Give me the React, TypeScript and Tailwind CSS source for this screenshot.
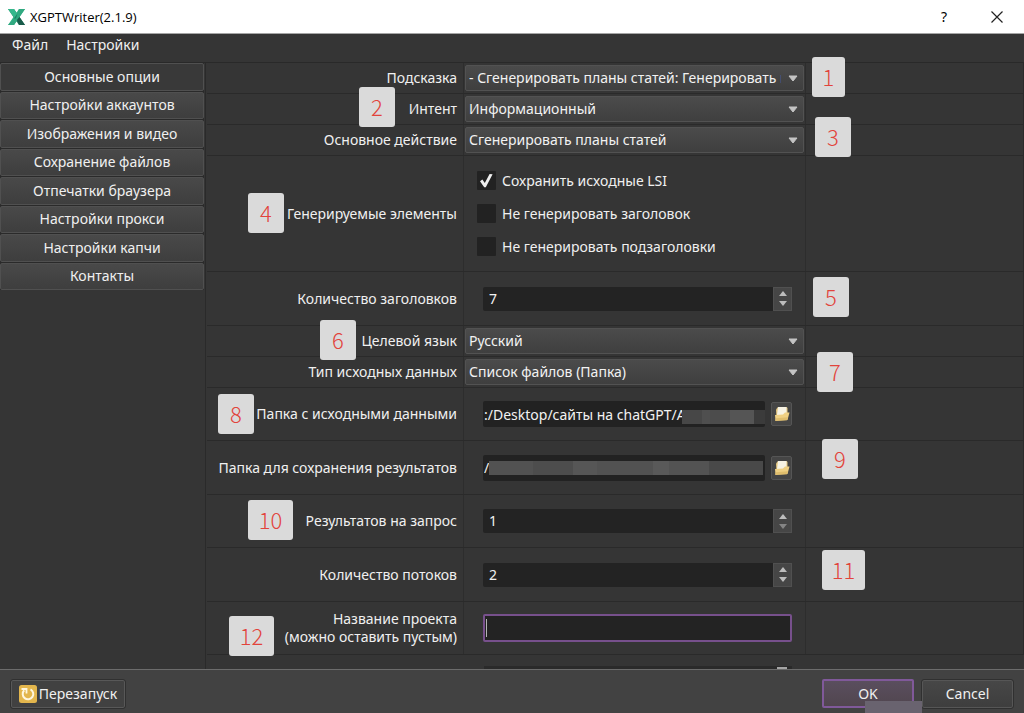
import type { ReactNode } from "react";

const sections = [
  "Основные опции",
  "Настройки аккаунтов",
  "Изображения и видео",
  "Сохранение файлов",
  "Отпечатки браузера",
  "Настройки прокси",
  "Настройки капчи",
  "Контакты",
];

function Marker({ n, className }: { n: number; className: string }) {
  return (
    <span
      className={`absolute z-10 flex h-10 items-center justify-center rounded-[3px] bg-[#dadada] pb-[3px] font-['Noto_Sans_CJK_SC','Noto_Sans',sans-serif] text-[22px] leading-none font-light text-[#e2433b] ${className}`}
    >
      {n}
    </span>
  );
}

type RowProps = {
  label?: ReactNode;
  htmlFor?: string;
  height: string;
  side?: ReactNode;
  marker?: ReactNode;
  flush?: boolean;
  children: ReactNode;
};

function Row({ label, htmlFor, height, side, marker, flush, children }: RowProps) {
  return (
    <div className={`flex shrink-0 border-b border-[#2a2a2a] ${height}`}>
      <div className="relative flex w-[257px] shrink-0 items-center justify-end border-r border-[#2d2d2d] pr-[6px] text-right leading-[18px]">
        {marker}
        <label htmlFor={htmlFor}>{label}</label>
      </div>
      <div
        className={`flex w-[342px] shrink-0 items-center border-r border-[#2d2d2d] ${flush ? "pr-px pl-px" : "pr-[13px] pl-[19px]"}`}
      >
        {children}
      </div>
      <div className="relative min-w-0 flex-1 border-r border-[#2a2a2a]">{side}</div>
    </div>
  );
}

function Combo({ id, value }: { id: string; value: string }) {
  return (
    <div className="relative w-full">
      <select
        id={id}
        className="block h-[26px] w-full appearance-none rounded-[2px] border border-[#525252] bg-linear-to-b from-[#4b4b4b] to-[#3f3f3f] pr-[22px] pl-[3px] text-[#f2f2f2] outline-none"
      >
        <option>{value}</option>
      </select>
      <svg className="pointer-events-none absolute top-[10px] right-[6px] h-[7px] w-[10px]" viewBox="0 0 10 7">
        <path d="M1 1h8L5 6z" fill="#c4c4c4" stroke="#c4c4c4" strokeLinejoin="round" />
      </svg>
    </div>
  );
}

function Spin({ id, value, atMin }: { id: string; value: string; atMin?: boolean }) {
  return (
    <div className="flex h-6 w-full rounded-[2px] bg-[#232323]">
      <input id={id} defaultValue={value} className="min-w-0 flex-1 bg-transparent pl-[6px] text-[#f2f2f2] outline-none" />
      <div className="flex w-[19px] flex-col border border-[#505050] bg-[#464646]">
        <button aria-label="Больше" className="flex flex-1 items-center justify-center">
          <svg className="h-[6px] w-[10px]" viewBox="0 0 10 6">
            <path d="M1 6h8L5 1z" fill="#bdbdbd" />
          </svg>
        </button>
        <button aria-label="Меньше" className="flex flex-1 items-center justify-center">
          <svg className="h-[6px] w-[10px]" viewBox="0 0 10 6">
            <path d="M1 0h8L5 5z" fill={atMin ? "#858585" : "#bdbdbd"} />
          </svg>
        </button>
      </div>
    </div>
  );
}

function PathField({ id, value, mask }: { id: string; value: string; mask: ReactNode }) {
  return (
    <div className="flex w-full items-center gap-[6px]">
      <div className="relative min-w-0 flex-1">
        <input id={id} defaultValue={value} className="block h-[26px] w-full rounded-[2px] bg-[#222222] pl-px text-[#f2f2f2] outline-none" />
        {mask}
      </div>
      <button aria-label="Выбрать папку" className="flex h-6 w-[21px] items-center justify-center rounded-[2px] border border-[#555555] bg-[#454545]">
        <svg className="h-4 w-4" viewBox="0 0 16 16">
          <path d="M2 3.5L4 1h8.500l1 1v8l-9 4-2-2z" fill="#e2c47c" />
          <path d="M4 1h8.500v8H3z" fill="#f7f3e4" />
          <path d="M1 9l8-.5 2-2h4.500L13.500 14l-12 1z" fill="#efd083" />
          <path d="M1 14.800l12-.6 1-3-12 1z" fill="#dfbd6c" />
        </svg>
      </button>
    </div>
  );
}

function Check({ label, checked }: { label: string; checked?: boolean }) {
  return (
    <label className="flex h-[33px] items-center gap-[6px]">
      <span className="relative h-[19px] w-[19px]">
        <input type="checkbox" defaultChecked={checked} className="peer block h-[19px] w-[19px] appearance-none rounded-[1px] bg-[#222222]" />
        <svg className="pointer-events-none absolute inset-0 hidden h-[19px] w-[19px] peer-checked:block" viewBox="0 0 19 19">
          <path d="M3 10.2l2.4-1.600 2.400 3.400L12.600 3l3 .2-6.800 13H7.200z" fill="#efefef" />
        </svg>
      </span>
      {label}
    </label>
  );
}

export default function App() {
  return (
    <div className="flex h-screen flex-col overflow-hidden bg-[#353535] font-['Noto_Sans','Open_Sans',sans-serif] text-[14px] leading-[18px] text-[#f0f0f0]">
      <header className="flex h-[34px] shrink-0 items-center border-b border-[#a5a5a5] bg-white pl-2 text-black">
        <svg className="h-4 w-[17px]" viewBox="0 0 17 16">
          <path d="M11 0h6L6 16H0z" fill="#2fae83" />
          <path d="M0 0h6l11 16h-6z" fill="#1d7f63" />
          <path d="M0 0h6l3.2 4.8-3 4.2z" fill="#35b88c" />
          <path d="M11 0h6L6 16H0l8-7z" fill="#30a980" />
          <path d="M9 11l2.5-3L17 16h-6z" fill="#195b4a" />
        </svg>
        <h1 className="ml-[5px] flex-1 font-['Open_Sans','Noto_Sans',sans-serif] text-[13px]">XGPTWriter(2.1.9)</h1>
        <button aria-label="Справка" className="w-[52px]">?</button>
        <button aria-label="Закрыть" className="flex w-[54px] justify-center">
          <svg className="h-3 w-3" viewBox="0 0 12 12">
            <path d="M.5.5l11 11M11.500.5l-11 11" stroke="#222" strokeWidth="1.200" />
          </svg>
        </button>
      </header>

      <nav className="flex h-[29px] shrink-0 gap-[18px] border-b border-[#292929] pl-3">
        <button className="h-[22px]">Файл</button>
        <button className="h-[22px]">Настройки</button>
      </nav>

      <div className="flex min-h-0 flex-1">
        <aside className="w-[206px] shrink-0 border-r border-[#2a2a2a] pr-px">
          <div className="flex h-[227px] flex-col gap-px bg-[#2a2a2a]">
            {sections.map((s, i) => (
              <button
                key={s}
                className={`flex-1 rounded-[2px] border border-[#505050] ${i === 0 ? "bg-[#393939]" : "bg-linear-to-b from-[#494949] to-[#3e3e3e]"}`}
              >
                {s}
              </button>
            ))}
          </div>
        </aside>

        <main className="-mt-2 flex min-w-0 flex-1 flex-col overflow-hidden pt-2 pl-px">
          <Row label="Подсказка" htmlFor="prompt" height="h-[31px]" flush side={<Marker n={1} className="-top-[6px] left-[6px] w-[33px]" />}>
            <Combo id="prompt" value="- Сгенерировать планы статей: Генерировать планы" />
          </Row>
          <Row label="Интент" htmlFor="intent" height="h-[31px]" flush marker={<Marker n={2} className="-top-[7px] right-[68px] w-9" />}>
            <Combo id="intent" value="Информационный" />
          </Row>
          <Row label="Основное действие" htmlFor="action" height="h-[31px]" flush side={<Marker n={3} className="-top-2 left-[9px] w-9" />}>
            <Combo id="action" value="Сгенерировать планы статей" />
          </Row>
          <Row label="Генерируемые элементы" height="h-[116px]" marker={<Marker n={4} className="top-[37px] right-[179px] w-9" />}>
            <div className="-ml-[6px]">
              <Check label="Сохранить исходные LSI" checked />
              <Check label="Не генерировать заголовок" />
              <Check label="Не генерировать подзаголовки" />
            </div>
          </Row>
          <Row label="Количество заголовков" htmlFor="headings" height="h-[54px]" side={<Marker n={5} className="top-[5px] left-[7px] w-9" />}>
            <Spin id="headings" value="7" />
          </Row>
          <Row label="Целевой язык" htmlFor="lang" height="h-[31px]" flush marker={<Marker n={6} className="-top-[6px] right-[107px] w-9" />}>
            <Combo id="lang" value="Русский" />
          </Row>
          <Row label="Тип исходных данных" htmlFor="source" height="h-[31px]" flush side={<Marker n={7} className="-top-[5px] left-[11px] w-9" />}>
            <Combo id="source" value="Список файлов (Папка)" />
          </Row>
          <Row label="Папка с исходными данными" htmlFor="input-dir" height="h-[53px]" marker={<Marker n={8} className="top-[6px] right-[209px] w-9" />}>
            <PathField
              id="input-dir"
              value=":/Desktop/сайты на chatGPT/A"
              mask={
                <div className="absolute right-0 bottom-[3px] flex h-[14px] w-[83px] bg-[#4b4b4b]">
                  <i className="w-5 bg-[#474747]" />
                  <i className="w-2 bg-[#4f4f4f]" />
                  <i className="w-5 bg-[#4c4c4c]" />
                  <i className="w-6 bg-[#555555]" />
                  <i className="flex-1 bg-[#3b3b3b]" />
                </div>
              }
            />
          </Row>
          <Row label="Папка для сохранения результатов" htmlFor="output-dir" height="h-[54px]" side={<Marker n={9} className="-top-[2px] left-4 w-9" />}>
            <PathField
              id="output-dir"
              value="/"
              mask={
                <div className="absolute right-[2px] bottom-[6px] left-[6px] flex h-[14px] bg-[#4d4d4d]">
                  <i className="w-11 bg-[#525252]" />
                  <i className="w-10 bg-[#4d4d4d]" />
                  <i className="w-6 bg-[#565656]" />
                  <i className="w-14 bg-[#525252]" />
                  <i className="w-4 bg-[#595959]" />
                  <i className="w-10 bg-[#535353]" />
                  <i className="flex-1 bg-[#494949]" />
                </div>
              }
            />
          </Row>
          <Row label="Результатов на запрос" htmlFor="results" height="h-[53px]" marker={<Marker n={10} className="top-[5px] right-[170px] w-[45px]" />}>
            <Spin id="results" value="1" atMin />
          </Row>
          <Row label="Количество потоков" htmlFor="threads" height="h-[54px]" side={<Marker n={11} className="top-[2px] left-4 w-[43px]" />}>
            <Spin id="threads" value="2" />
          </Row>
          <Row
            label={<>Название проекта<br />(можно оставить пустым)</>}
            htmlFor="project"
            height="h-[53px]"
            marker={<Marker n={12} className="top-[14px] right-[189px] w-[45px]" />}
          >
            <div className="relative w-full">
              <input id="project" className="block h-7 w-full rounded-[2px] border-2 border-[#77508c] bg-[#232323] pl-1 text-[#f2f2f2] outline-none" />
              <span className="absolute top-[5px] left-[3px] h-[18px] w-px bg-[#b5b5b5]" />
            </div>
          </Row>
          <div className="flex flex-1 items-end justify-end pr-[232px]">
            <div className="flex h-[3px] w-[308px] items-end justify-end bg-[#2a2a2a] pr-[5px]">
              <span className="h-[2px] w-[10px] bg-[#a5a5a5]" />
            </div>
          </div>
        </main>
      </div>

      <footer className="relative flex h-11 shrink-0 items-center gap-2 border-t border-[#6c6c6c] bg-[#424242] pt-[5px] pr-[11px] pb-px pl-[11px]">
        <button className="flex h-7 w-[114px] items-center justify-center gap-[2px] rounded-[2px] border border-[#585858] bg-[#414141] outline outline-[#303030]">
          <svg className="h-[18px] w-[18px]" viewBox="0 0 18 18">
            <rect width="18" height="18" rx="2.500" fill="#e3b64d" />
            <path d="M11.500 4.300a5.300 5.300 0 1 1-6.300 1" fill="none" stroke="#fff7df" strokeWidth="2" />
            <path d="M2.500 4h5v4.500" fill="none" stroke="#fff7df" strokeWidth="1.800" />
          </svg>
          Перезапуск
        </button>
        <span className="flex-1" />
        <button className="h-[29px] w-[92px] rounded-[2px] border-2 border-[#80599a] bg-linear-to-b from-[#5a4e5e] to-[#51464f]">OK</button>
        <button className="h-7 w-[91px] rounded-[2px] border border-[#565656] bg-linear-to-b from-[#474747] to-[#3e3e3e] outline outline-[#303030]">Cancel</button>
        <span className="absolute right-[102px] bottom-0 h-3 w-[57px] bg-[#69636f]" />
      </footer>
    </div>
  );
}
